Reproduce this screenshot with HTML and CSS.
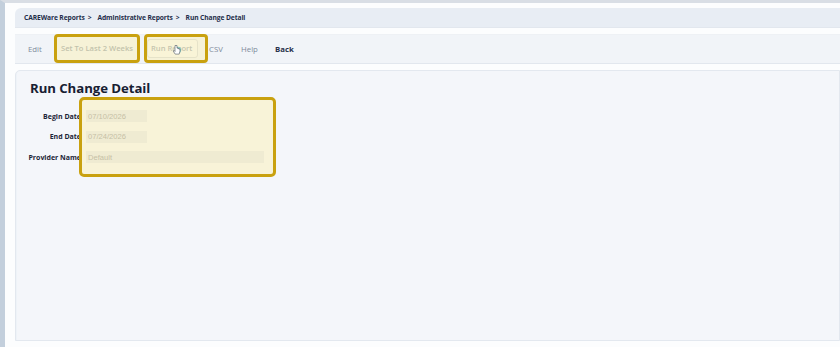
FILE: index.html
```html
<!DOCTYPE html>
<html>
<head>
<meta charset="utf-8">
<link rel="stylesheet" href="styles.css">
</head>
<body>
<div class="frame">
  <div class="page">
    <div class="crumbs">
      <span>CAREWare Reports</span><span class="sep">&gt;</span>
      <span>Administrative Reports</span><span class="sep">&gt;</span>
      <span>Run Change Detail</span>
    </div>
    <div class="toolbar">
      <span class="tool edit">Edit</span>
      <span class="tool hl hl-weeks">Set To Last 2 Weeks</span>
      <span class="tool hl hl-run"><span class="runbtn">Run Report</span>
        <svg class="cursor" width="10" height="12" viewBox="0 0 10 12">
          <circle cx="6" cy="6" r="3.2" fill="#7fc6c0" opacity="0.8"/>
          <path d="M3 1.5 v6 l-1-1 -0.8 0.6 2 3 h4 l0.8-3 v-2 h-1 v-0.5 h-1 v-0.5 h-1 v-2.6 z" fill="#fff" stroke="#4c5562" stroke-width="0.6" stroke-linejoin="round"/>
        </svg>
      </span>
      <span class="tool csv">CSV</span>
      <span class="tool help">Help</span>
      <span class="tool back">Back</span>
    </div>
    <div class="main">
      <h1 class="title">Run Change Detail</h1>
      <div class="form">
        <div class="labels">
          <div class="lbl">Begin Date</div>
          <div class="lbl">End Date</div>
          <div class="lbl">Provider Name</div>
        </div>
        <div class="fields">
          <div class="row"><span class="input short">07/10/2026</span></div>
          <div class="row"><span class="input short">07/24/2026</span></div>
          <div class="row"><span class="input long">Default</span></div>
          <div class="hl-form"></div>
        </div>
      </div>
    </div>
  </div>
</div>
</body>
</html>
```

FILE: styles.css
```css
* { box-sizing: border-box; }
html, body { margin: 0; padding: 0; }
body {
  width: 840px;
  height: 347px;
  overflow: hidden;
  background: #fbfcfd;
  font-family: "Open Sans", "Noto Sans", sans-serif;
}
.frame {
  height: 347px;
  border-left: 5px solid #c3cfdc;
  border-top: 3px solid #d9dee5;
  background: #fcfdfe;
}
.page {
  padding: 5px 0 0 10px;
  display: flex;
  flex-direction: column;
}
.crumbs {
  height: 20px;
  background: #e8edf4;
  border-radius: 6px 0 0 0;
  border-bottom: 1px solid #e2e7ee;
  display: flex;
  align-items: center;
  padding-left: 9px;
  font-size: 6.7px;
  font-weight: 700;
  color: #1f2d4a;
  letter-spacing: -0.1px;
}
.crumbs .sep { margin: 0 6px 0 3px; }
.toolbar {
  margin-top: 6px;
  height: 30px;
  background: #f1f4f8;
  border-top: 1px solid #eef1f5;
  border-bottom: 1px solid #e2e7ee;
  display: flex;
  align-items: stretch;
  font-size: 7.8px;
  color: #7f8b9b;
}
.tool {
  display: flex;
  align-items: center;
  padding-bottom: 1px;
}
.edit { margin-left: 13px; width: 26px; }
.hl {
  position: relative;
  justify-content: center;
  height: 29px;
  margin-top: -1px;
}
.hl::after {
  content: "";
  position: absolute;
  inset: 0;
  border: 3px solid #c9a10f;
  border-radius: 4px;
  background: rgba(255, 238, 160, 0.38);
}
.hl-weeks { width: 86px; color: #9da7b4; font-weight: 600; font-size: 7.6px; }
.hl-run { width: 64px; margin-left: 4px; justify-content: flex-start; padding-left: 3px; }
.runbtn {
  width: 51px;
  height: 19px;
  border: 1px solid #d7dbe2;
  border-radius: 3px;
  background: #f6f7f9;
  display: flex;
  align-items: center;
  padding-left: 3px;
  color: #a3acb8;
  font-weight: 600;
  font-size: 7.6px;
}
.cursor {
  position: absolute;
  left: 28px;
  top: 10px;
  z-index: 2;
}
.csv { margin-left: 1px; width: 32px; }
.help { width: 34px; }
.back { color: #28324a; font-weight: 700; }
.main {
  margin-top: 6px;
  height: 271px;
  background: #f4f6fa;
  border: 1px solid #e3e8ef;
  border-radius: 5px 0 0 0;
  box-shadow: inset 1px 0 0 #eef3f8;
  padding: 7px 0 0 14px;
}
.title {
  margin: 0;
  font-size: 13.2px;
  font-weight: 700;
  color: #172032;
  line-height: 20px;
  letter-spacing: -0.05px;
}
.form {
  display: flex;
  margin-top: 8px;
}
.labels {
  width: 51px;
  display: flex;
  flex-direction: column;
  align-items: flex-end;
  white-space: nowrap;
}
.lbl {
  height: 20.5px;
  display: flex;
  align-items: center;
  font-size: 7px;
  font-weight: 700;
  color: #1c2538;
}
.fields {
  position: relative;
  margin-left: 5px;
}
.row {
  height: 20.5px;
  display: flex;
  align-items: center;
}
.input {
  height: 12px;
  background: #e5e8f1;
  font-size: 7.6px;
  color: #a2a3a8;
  display: flex;
  align-items: center;
  padding-left: 2px;
  font-family: "Liberation Sans", Arial, sans-serif;
}
.short { width: 61px; }
.long { width: 178px; }
.hl-form {
  position: absolute;
  left: -7px;
  top: -9px;
  width: 197px;
  height: 80px;
  border: 3px solid #c9a10f;
  border-radius: 5px;
  background: rgba(255, 238, 160, 0.38);
}
```
